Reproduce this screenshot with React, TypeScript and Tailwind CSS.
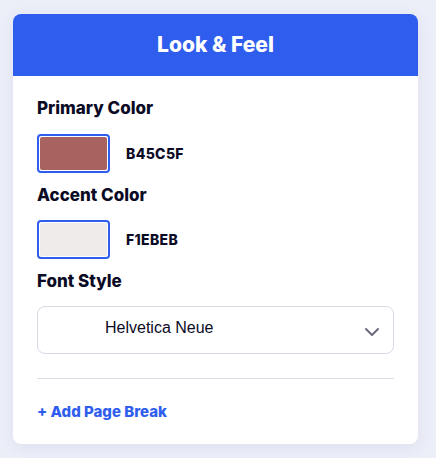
import { ChevronDown } from "lucide-react";

function Swatch({ color, label }: { color: string; label: string }) {
  return (
    <div className="flex items-center gap-4">
      <div className="h-[39px] w-[73px] rounded-[4px] border-2 border-[#2f5ded] bg-white p-px">
        <div className="h-full w-full rounded-[2px]" style={{ backgroundColor: color }} />
      </div>
      <span className="text-[14px] font-extrabold tracking-wide text-[#0b0b26]">{label}</span>
    </div>
  );
}

export default function App() {
  return (
    <div className="min-h-[458px] bg-[#eceff8] pt-[14px] font-['Inter',sans-serif]">
      <div className="ml-[13px] w-[405px] overflow-hidden rounded-lg bg-white shadow-[0_4px_16px_rgba(60,70,140,0.08)]">
        <div className="flex h-[62px] items-center justify-center bg-[#2f5ded]">
          <h2 className="text-[21px] font-extrabold text-white">Look &amp; Feel</h2>
        </div>
        <div className="px-6 pb-[20px] pt-[22px]">
          <p className="text-[17px] leading-5 font-extrabold text-[#0b0b26]">Primary Color</p>
          <div className="mt-4">
            <Swatch color="#a86361" label="B45C5F" />
          </div>
          <p className="mt-3 text-[17px] leading-5 font-extrabold text-[#0b0b26]">Accent Color</p>
          <div className="mt-[15px]">
            <Swatch color="#eeebea" label="F1EBEB" />
          </div>
          <p className="mt-3 text-[17px] leading-5 font-extrabold text-[#0b0b26]">Font Style</p>
          <div className="mt-[15px] flex h-[48px] items-center justify-between rounded-lg border border-[#d9d9e6] pl-[67px] pr-[9px]">
            <span className="pb-1 font-['Liberation_Sans',sans-serif] text-[16px] text-[#0b0b26]">
              Helvetica Neue
            </span>
            <ChevronDown className="mt-1 h-6 w-6 text-[#6b6b7b]" strokeWidth={2} />
          </div>
          <div className="mt-6 border-t border-[#dcdce6]" />
          <button className="mt-[22px] text-[15px] font-extrabold text-[#2f5ded]">+ Add Page Break</button>
        </div>
      </div>
    </div>
  );
}
